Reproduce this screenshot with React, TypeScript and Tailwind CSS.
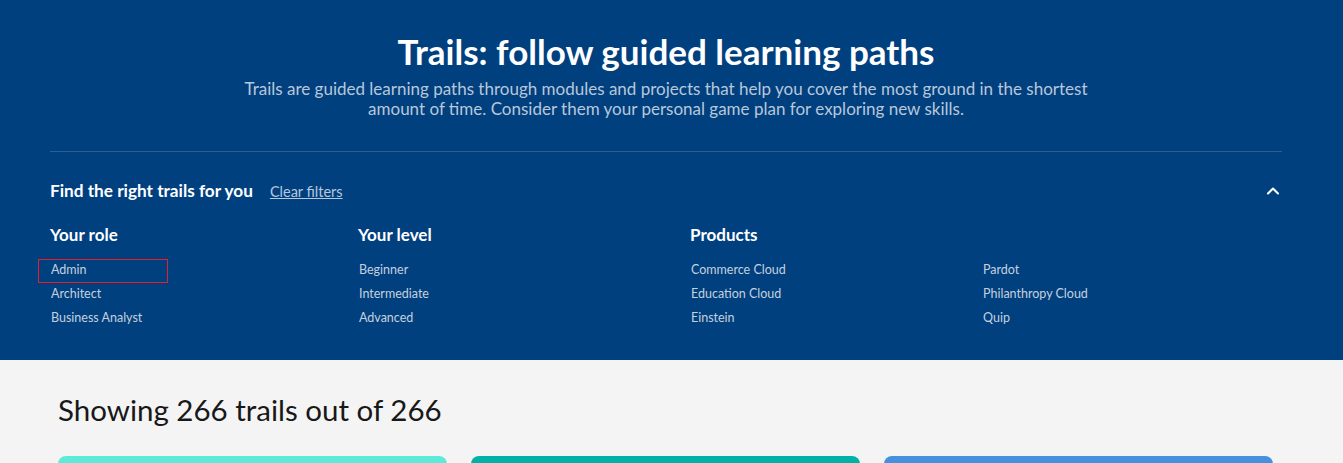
import React from 'react';
import { ChevronUp } from 'lucide-react';

const roles = ['Admin', 'Architect', 'Business Analyst'];
const levels = ['Beginner', 'Intermediate', 'Advanced'];
const productsA = ['Commerce Cloud', 'Education Cloud', 'Einstein'];
const productsB = ['Pardot', 'Philanthropy Cloud', 'Quip'];

const FilterItem: React.FC<{ label: string; focused?: boolean }> = ({ label, focused }) => (
  <div
    className={
      'h-6 flex items-center text-[12.5px] text-[#c5d0de] ' +
      (focused ? '-ml-[12px] pl-[12px] w-[130px] border border-[#e5202e]' : 'pl-px')
    }
  >
    {label}
  </div>
);

const FilterColumn: React.FC<{ title?: string; items: string[]; focusFirst?: boolean }> = ({ title, items, focusFirst }) => (
  <div>
    <h3 className="h-[22px] text-[17px] font-bold text-white leading-[22px]">{title ?? '\u00a0'}</h3>
    <div className="mt-[13px] flex flex-col">
      {items.map((item, i) => (
        <FilterItem key={item} label={item} focused={focusFirst && i === 0} />
      ))}
    </div>
  </div>
);

const App: React.FC = () => {
  const cards = ['bg-[#5debd9]', 'bg-[#00b2a6]', 'bg-[#4591de]'];

  return (
    <div className="min-h-screen bg-[#f4f4f4]" style={{ fontFamily: 'Lato, "Open Sans", sans-serif' }}>
      <header className="bg-[#00407f] h-[360px] pl-[50px] pr-[61px]">
        <div className="pt-[31px] text-center">
          <h1 className="text-[35px] font-bold text-white leading-[40px]">Trails: follow guided learning paths</h1>
          <p className="mt-[8px] text-[17px] leading-[20px] text-[#b9c7da] max-w-[900px] mx-auto">
            Trails are guided learning paths through modules and projects that help you cover the most ground in the shortest
            amount of time. Consider them your personal game plan for exploring new skills.
          </p>
        </div>

        <div className="mt-[32px] border-t border-[#2b5e93]" />

        <div className="mt-[26px] flex items-center justify-between">
          <div className="flex items-baseline gap-[17px]">
            <h2 className="text-[17.2px] font-bold text-white">Find the right trails for you</h2>
            <a href="#" className="text-[14.5px] text-[#b9c7da] underline">Clear filters</a>
          </div>
          <ChevronUp className="w-5 h-5 text-white mr-[-1px]" strokeWidth={2.5} />
        </div>

        <div className="mt-[20px] grid grid-cols-[308px_332px_292px_1fr]">
          <FilterColumn title="Your role" items={roles} focusFirst />
          <FilterColumn title="Your level" items={levels} />
          <FilterColumn title="Products" items={productsA} />
          <FilterColumn items={productsB} />
        </div>
      </header>

      <main className="pl-[58px] pr-[70px]">
        <h2 className="pt-[32px] text-[29.5px] leading-[36px] text-[#181818]">Showing 266 trails out of 266</h2>
        <div className="mt-[28px] grid grid-cols-3 gap-6">
          {cards.map((c) => (
            <div key={c} className={'h-[200px] rounded-t-lg ' + c} />
          ))}
        </div>
      </main>
    </div>
  );
};

export default App;
